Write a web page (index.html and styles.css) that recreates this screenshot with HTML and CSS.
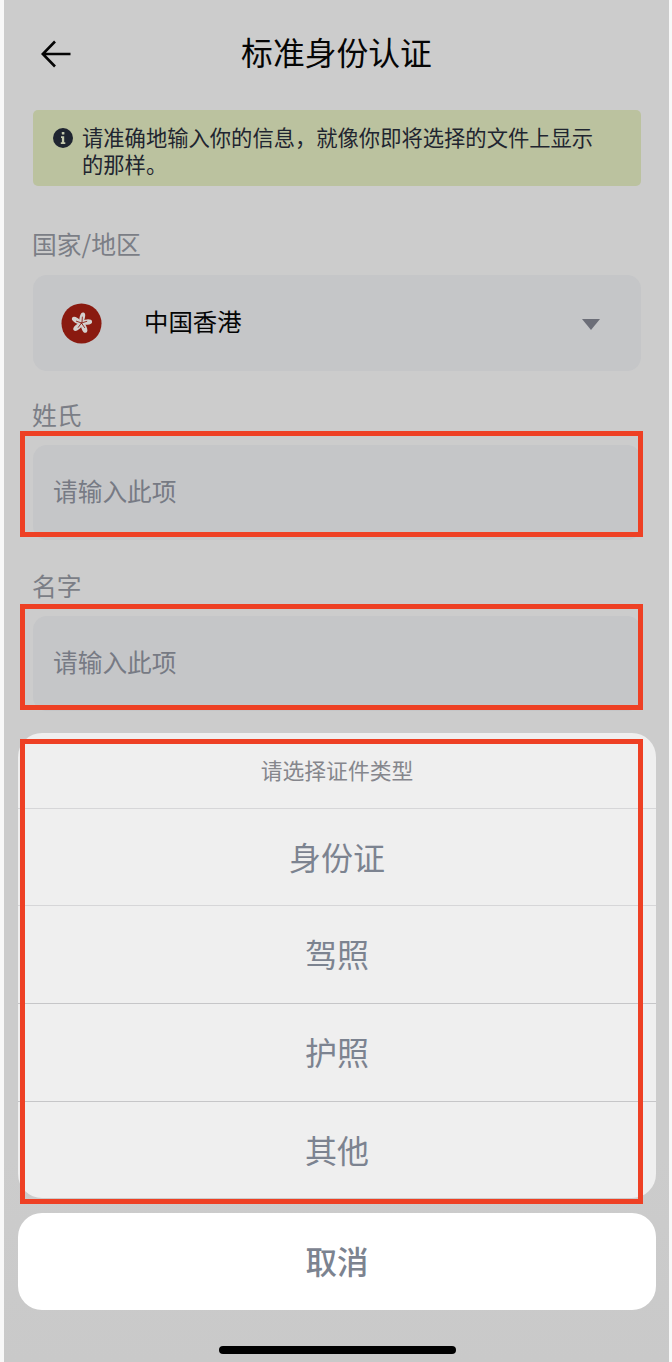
FILE: index.html
```html
<!DOCTYPE html>
<html lang="zh-CN">
<head>
<meta charset="utf-8">
<title>标准身份认证</title>
<link rel="stylesheet" href="styles.css">
</head>
<body>
<div class="frame">
  <header class="topbar">
    <svg class="back" viewBox="0 0 30 28" aria-hidden="true"><path d="M14 1.500 1.800 14 14 26.500M2 14h27.500"/></svg>
    <h1 class="title">标准身份认证</h1>
  </header>

  <div class="notice">
    <svg class="info" viewBox="0 0 20 20" aria-hidden="true"><circle cx="10" cy="10" r="10" fill="#1f2530"/><rect x="8.800" y="4" width="2.600" height="2.600" rx=".6" fill="#c4c9ad"/><path d="M8 8.300h3.200v6h1.100v1.600H7.800v-1.600h1.100V9.900H8z" fill="#c4c9ad"/></svg>
    <p class="notice-text">请准确地输入你的信息，就像你即将选择的文件上显示的那样。</p>
  </div>

  <form class="form">
    <div class="field field-country">
      <div class="label">国家/地区</div>
      <div class="control select">
        <svg class="flag" viewBox="0 0 42 42" aria-hidden="true">
          <circle cx="21" cy="21" r="20.500" fill="#8a1a10"/>
          <g fill="#d4d0ce">
            <ellipse cx="21.800" cy="14.800" rx="2.700" ry="5.200" transform="rotate(14 21.800 14.800)"/>
            <ellipse cx="21.800" cy="14.800" rx="2.700" ry="5.200" transform="rotate(72 21 20.500) rotate(14 21.800 14.800)"/>
            <ellipse cx="21.800" cy="14.800" rx="2.700" ry="5.200" transform="rotate(144 21 20.500) rotate(14 21.800 14.800)"/>
            <ellipse cx="21.800" cy="14.800" rx="2.700" ry="5.200" transform="rotate(216 21 20.500) rotate(14 21.800 14.800)"/>
            <ellipse cx="21.800" cy="14.800" rx="2.700" ry="5.200" transform="rotate(288 21 20.500) rotate(14 21.800 14.800)"/>
          </g>
          <g fill="none" stroke="#8a1a10" stroke-width=".9">
            <path d="M21.500 20l.4-6M21 20.500l5.800-1.800M21 20.500l3.400 5M21 20.500l-3.600 4.800M21 20.500l-5.600-2"/>
          </g>
        </svg>
        <span class="value">中国香港</span>
        <span class="caret"></span>
      </div>
    </div>
    <div class="field field-name field-surname">
      <div class="label">姓氏</div>
      <div class="control input"><span class="placeholder">请输入此项</span></div>
      <div class="mark mark-surname"></div>
    </div>
    <div class="field field-name field-given">
      <div class="label">名字</div>
      <div class="control input"><span class="placeholder">请输入此项</span></div>
      <div class="mark mark-given"></div>
    </div>
  </form>

  <div class="sheet">
    <div class="sheet-title">请选择证件类型</div>
    <div class="option">身份证</div>
    <div class="option">驾照</div>
    <div class="option">护照</div>
    <div class="option">其他</div>
    <div class="mark mark-sheet"></div>
  </div>
  <div class="cancel">取消</div>
  <div class="home-bar"></div>
</div>
</body>
</html>
```
FILE: styles.css
```css
* { box-sizing: border-box; }
html, body { margin: 0; padding: 0; background: #f8f8f8; }
body {
  width: 672px;
  height: 1362px;
  overflow: hidden;
  font-family: "Noto Sans CJK SC", "Noto Sans", sans-serif;
}
.frame {
  position: relative;
  width: 665px;
  height: 1362px;
  margin-left: 4px;
  padding: 0 28px 0 29px;
  background: linear-gradient(#cccccc 0, #cccccc 85%, #c9c9c9 100%);
}
.topbar {
  position: relative;
  height: 110px;
  padding: 28px 1px 0 0;
  text-align: center;
}
.back {
  position: absolute;
  left: 8px;
  top: 40px;
  width: 30px;
  height: 28px;
  fill: none;
  stroke: #050505;
  stroke-width: 2.600;
}
.title {
  margin: 0;
  font-size: 31.800px;
  line-height: 46px;
  font-weight: 400;
  color: #050505;
}
.notice {
  display: flex;
  gap: 9px;
  height: 76px;
  padding: 13px 40px 0 20px;
  border-radius: 5px;
  background: #bbc29f;
}
.info { flex: none; width: 20px; height: 20px; margin-top: 5px; }
.notice-text {
  margin: 0;
  font-size: 21.300px;
  line-height: 27px;
  color: #1f2530;
}
.form { display: flex; flex-direction: column; }
.field { position: relative; }
.field-country { margin-top: 42px; }
.field-surname { margin-top: 28px; }
.field-given { margin-top: 30px; }
.label {
  height: 32px;
  margin-left: -1px;
  font-size: 24.800px;
  line-height: 30px;
  color: #7b7e86;
}
.field-country .label { margin-bottom: 15px; }
.field-name .label { margin-bottom: 14px; }
.control { border-radius: 14px; background: #c5c6c8; }
.select {
  display: flex;
  align-items: center;
  height: 96px;
  padding: 0 41px 0 28px;
}
.flag { flex: none; width: 41px; height: 41px; }
.value {
  flex: 1;
  margin: -6px 0 0 42px;
  font-size: 24.400px;
  color: #050505;
}
.caret {
  width: 0;
  height: 0;
  margin-top: 2px;
  border-left: 9px solid transparent;
  border-right: 9px solid transparent;
  border-top: 11px solid #6c6e78;
}
.input {
  display: flex;
  align-items: center;
  height: 95px;
  padding-left: 20px;
}
.placeholder { font-size: 24.700px; color: #777a84; margin-top: -6px; }
.mark {
  position: absolute;
  border: 5px solid #ee4024;
  pointer-events: none;
}
.mark-surname { left: -13px; width: 623px; top: 32px; height: 106px; }
.mark-given { left: -13px; width: 623px; top: 34px; height: 106px; }
.sheet {
  position: absolute;
  left: 14px;
  top: 733px;
  width: 638px;
  height: 465px;
  border-radius: 24px;
  background: #efefef;
}
.mark-sheet { left: 2px; top: 6px; width: 623px; height: 465px; }
.sheet-title {
  height: 75px;
  font-size: 21.800px;
  line-height: 74px;
  text-align: center;
  color: #85868c;
}
.option {
  height: 98px;
  border-top: 1px solid #d6d6d8;
  font-size: 32px;
  line-height: 95px;
  text-align: center;
  color: #7c8390;
}
.option:nth-of-type(2) { height: 97px; }
.option:nth-child(4), .option:nth-child(5) { border-top-color: #c6c6c8; }
.cancel {
  position: absolute;
  left: 14px;
  top: 1213px;
  width: 638px;
  height: 97px;
  border-radius: 24px;
  background: #fff;
  font-size: 31.500px;
  font-weight: 500;
  line-height: 95px;
  text-align: center;
  color: #7c8390;
}
.home-bar {
  position: absolute;
  left: 215px;
  top: 1346px;
  width: 237px;
  height: 8px;
  border-radius: 4px;
  background: #000;
}
```
